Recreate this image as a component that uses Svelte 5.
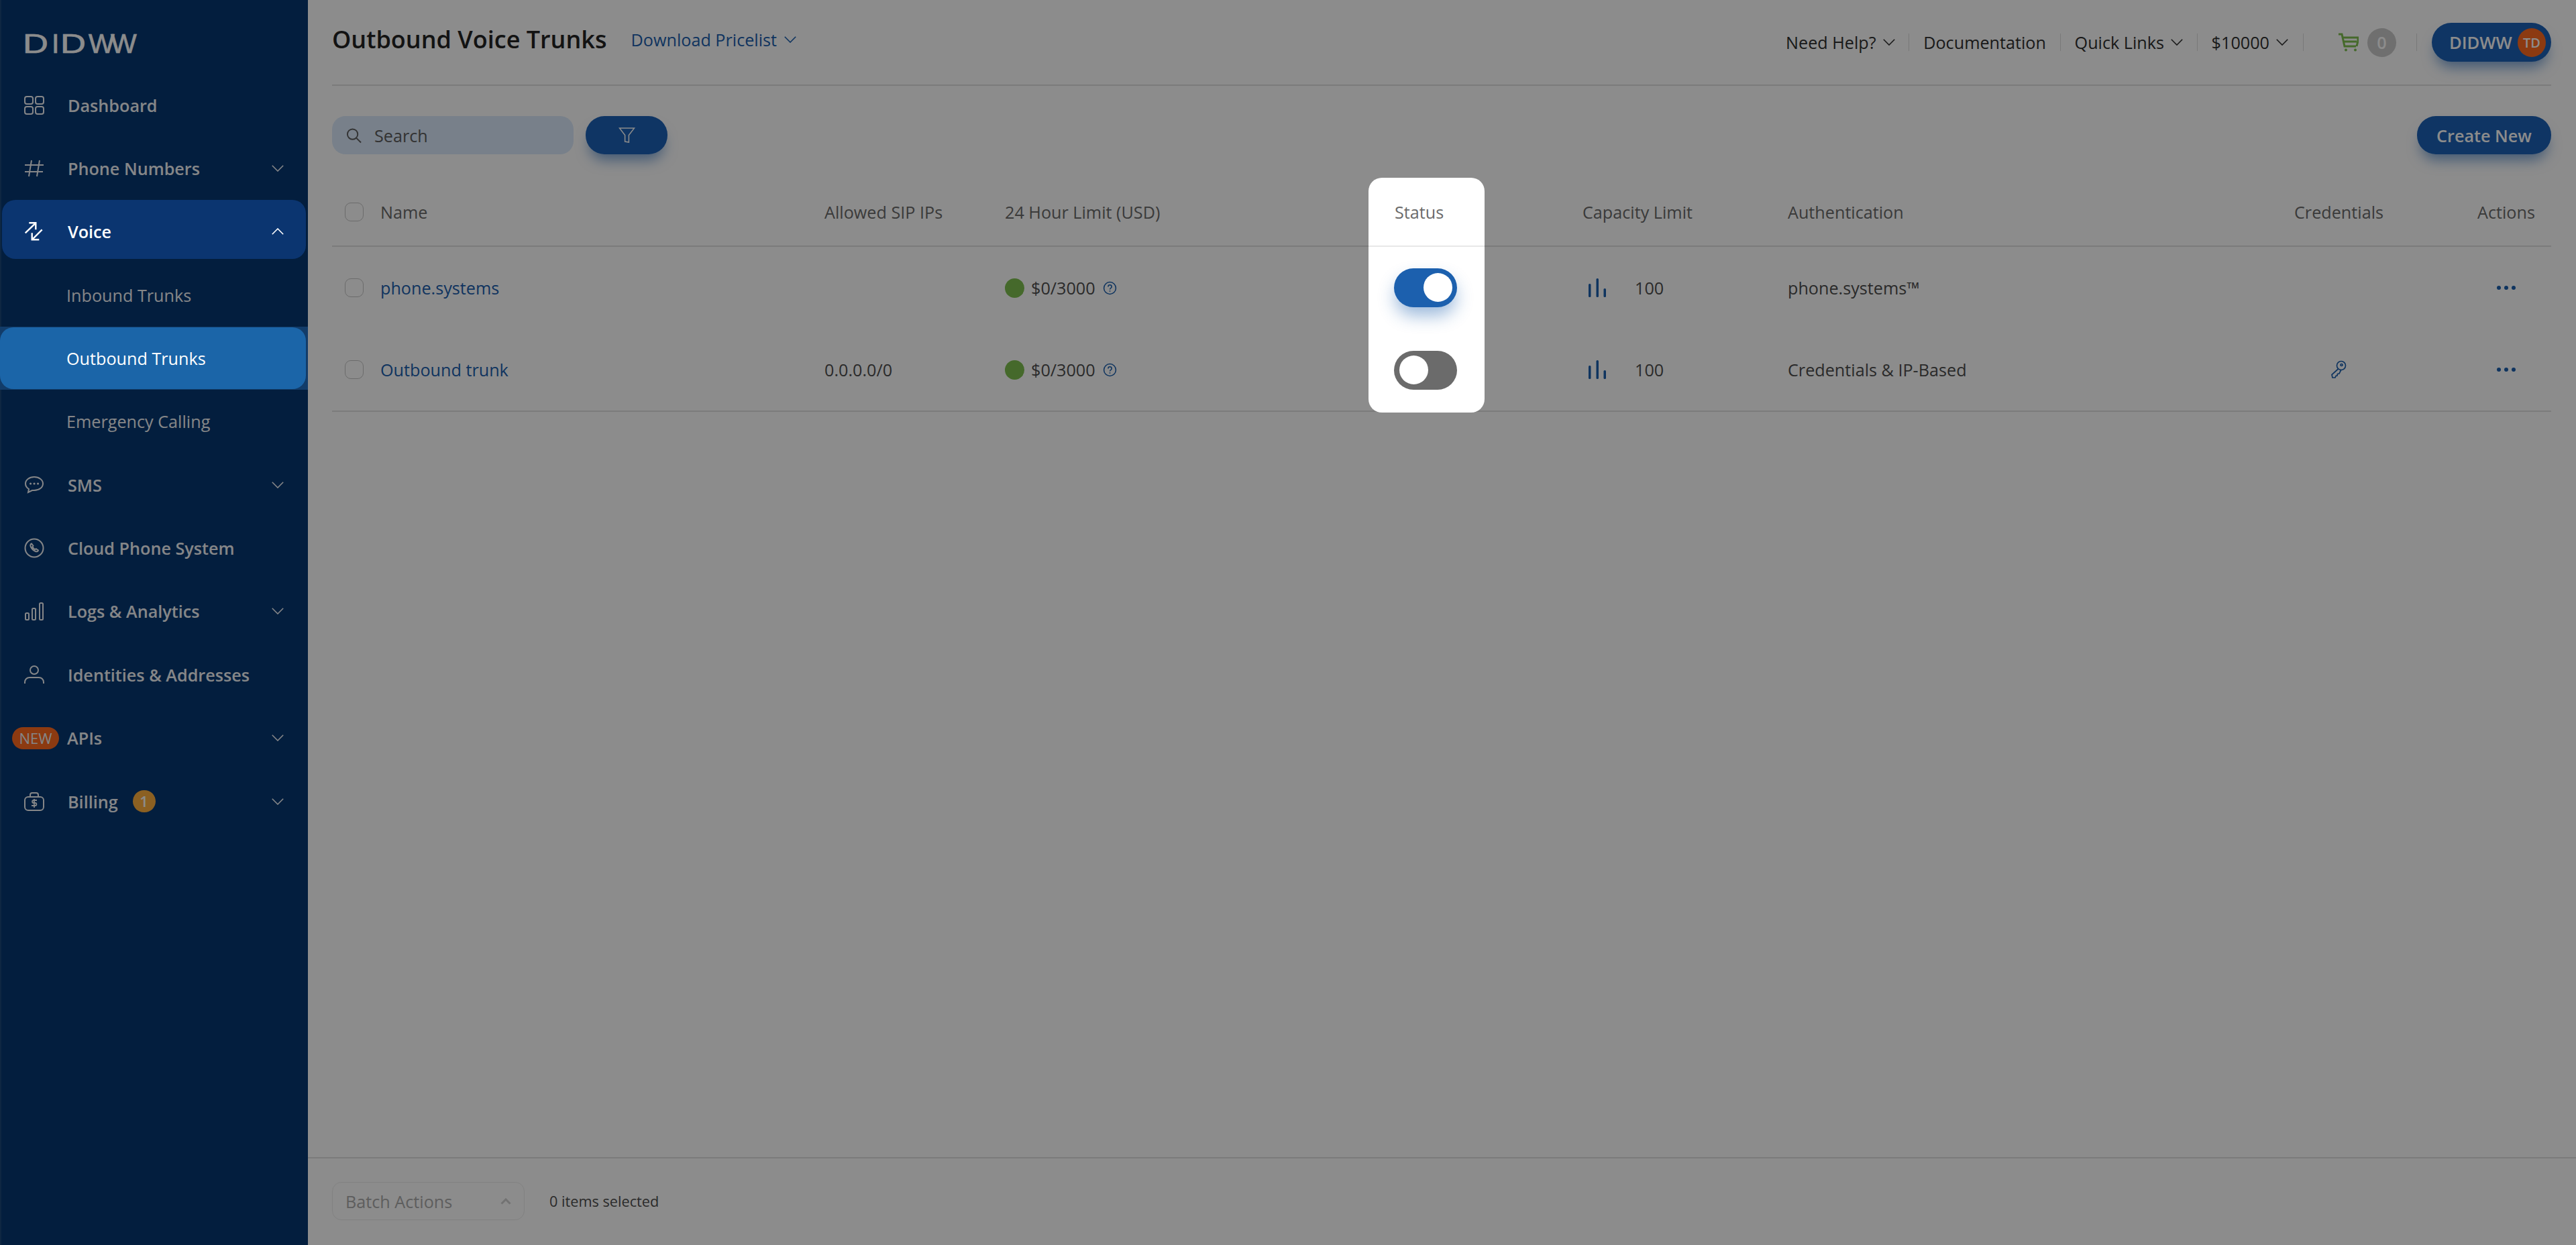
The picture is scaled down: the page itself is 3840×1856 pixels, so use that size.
<script>
  const nav = [
    { label: 'Dashboard', icon: 'dash' },
    { label: 'Phone Numbers', icon: 'hash', chev: true },
    { label: 'Voice', icon: 'voice', chev: true, open: true },
    { label: 'Inbound Trunks', sub: true },
    { label: 'Outbound Trunks', sub: true, current: true },
    { label: 'Emergency Calling', sub: true },
    { label: 'SMS', icon: 'sms', chev: true },
    { label: 'Cloud Phone System', icon: 'phone' },
    { label: 'Logs & Analytics', icon: 'logs', chev: true },
    { label: 'Identities & Addresses', icon: 'user' },
    { label: 'APIs', icon: 'new', chev: true },
    { label: 'Billing', icon: 'bill', chev: true, badge: '1' }
  ];
  const rows = [
    { name: 'phone.systems', ips: '', auth: 'phone.systems™', key: false, on: true },
    { name: 'Outbound trunk', ips: '0.0.0.0/0', auth: 'Credentials & IP-Based', key: true, on: false }
  ];
</script>

{#snippet chevron(cls)}
  <svg class={cls} viewBox="0 0 18 10" fill="none" stroke="currentColor" stroke-width="1.6"><path d="M.8.8 9 9 17.2.8"/></svg>
{/snippet}

<div class="app">
  <aside class="side">
    <div class="logo"><span class="d">D</span><span class="n">I</span><span class="d">D</span><span class="w">W</span><span class="w">W</span></div>
    <nav class="menu">
      {#each nav as n}
        <div class="item" class:sub={n.sub} class:open={n.open} class:current={n.current}>
          <div class="pill">
            {#if n.icon === 'new'}
              <span class="new">NEW</span>
            {:else if n.icon}
              <svg class="ico" viewBox="0 0 30 30" fill="none" stroke="currentColor" stroke-width="2">
                {#if n.icon === 'dash'}
                  <rect x="1" y="2" width="12" height="11" rx="3"/><rect x="17" y="2" width="12" height="11" rx="3"/><rect x="1" y="17" width="12" height="11" rx="3"/><rect x="17" y="17" width="12" height="11" rx="3"/>
                {:else if n.icon === 'hash'}
                  <path d="M11 3 7 27M23 3l-4 24M1 10h28M1 20h27"/>
                {:else if n.icon === 'voice'}
                  <path stroke-width="2.4" d="M1.700 17.300 17.300 2.300M7.300 2.300h10v10M26.700 12.300 11.700 27.300M11.700 17.300v10h10.600"/>
                {:else if n.icon === 'sms'}
                  <path d="M15 3C7.500 3 2 7.500 2 13c0 3.500 2.200 6.300 5 8l-1 5 6-3h3c7.500 0 13-4.500 13-10S22.500 3 15 3Z"/><path stroke-width="3" stroke-linecap="round" d="M9.500 13h.1M15 13h.1M20.500 13h.1"/>
                {:else if n.icon === 'phone'}
                  <circle cx="15" cy="15" r="13.500"/><path stroke-width="2" d="M11 8.500c-2 .8-2.200 3-.8 5.300 1.500 3 3.800 5 6.800 6.200 2 .6 3.600 0 4-1.600l-3.200-2.200-1.600 1c-1.800-1-3-2.300-3.800-4.200l1-1.500Z"/>
                {:else if n.icon === 'logs'}
                  <rect x="2" y="18" width="5" height="10" rx="1.500"/><rect x="12" y="11" width="5" height="17" rx="1.500"/><rect x="23" y="3" width="5" height="25" rx="1.500"/>
                {:else if n.icon === 'user'}
                  <circle cx="15" cy="8" r="6"/><path d="M1 28v-2c0-4 3-7 7-7h14c4 0 7 3 7 7v2"/>
                {:else if n.icon === 'bill'}
                  <path d="M9 8V5c0-2 1-3 3-3h6c2 0 3 1 3 3v3"/><rect x="1" y="8" width="28" height="20" rx="5"/><path stroke-width="1.800" d="M19 13h-5c-2.500 0-2.500 4 0 4h2.500c2.500 0 2.500 4 0 4H11M15 11v13"/>
                {/if}
              </svg>
            {/if}
            <span class="lbl">{n.label}</span>
            {#if n.badge}<span class="bdg">{n.badge}</span>{/if}
            {#if n.chev}{@render chevron(n.open ? 'nchev up' : 'nchev')}{/if}
          </div>
        </div>
      {/each}
    </nav>
  </aside>

  <main class="main">
    <header class="top">
      <div class="titles">
        <h1>Outbound Voice Trunks</h1>
        <a class="dl">Download Pricelist {@render chevron('chev')}</a>
      </div>
      <div class="links">
        <span class="lk">Need Help? {@render chevron('chev')}</span><i class="sep"></i>
        <span class="lk">Documentation</span><i class="sep"></i>
        <span class="lk">Quick Links {@render chevron('chev')}</span><i class="sep"></i>
        <span class="lk">$10000 {@render chevron('chev')}</span><i class="sep end"></i>
        <svg class="cart" viewBox="0 0 30 28" fill="none" stroke="#7ec04f" stroke-width="3"><path d="M0 2h5l4 18h17M6 7h23v5l-2 8M8 13h19"/><circle cx="11" cy="25.500" r="2" fill="#7ec04f" stroke="none"/><circle cx="25" cy="25.500" r="2" fill="#7ec04f" stroke="none"/></svg>
        <span class="zero">0</span><i class="sep last"></i>
        <button class="user">DIDWW<span class="av">TD</span></button>
      </div>
    </header>

    <div class="tools">
      <div class="search">
        <svg class="mag" viewBox="0 0 24 24" fill="none" stroke="currentColor" stroke-width="2"><circle cx="10" cy="10" r="8"/><path d="m16 16 7 7"/></svg>
        <span>Search</span>
      </div>
      <button class="fbtn" aria-label="Filter">
        <svg viewBox="0 0 26 26" fill="none" stroke="#fff" stroke-width="1.600"><path d="M1.500 2h23L16 13v11l-6-1V13Z"/></svg>
      </button>
      <button class="create">Create New</button>
    </div>

    <div class="table">
      <div class="row head">
        <div class="c first"><i class="box"></i>Name</div><div class="c">Allowed SIP IPs</div><div class="c">24 Hour Limit (USD)</div><div class="c"></div><div class="c">Capacity Limit</div><div class="c">Authentication</div><div class="c">Credentials</div><div class="c">Actions</div>
      </div>
      {#each rows as r, i}
        <div class="row body" class:end={i === 1}>
          <div class="c first"><i class="box"></i><a class="name">{r.name}</a></div>
          <div class="c">{r.ips}</div>
          <div class="c"><i class="dot"></i>$0/3000
            <svg class="q" viewBox="0 0 20 20" fill="none" stroke="#1c60ae" stroke-width="1.500"><circle cx="10" cy="10" r="8.500"/><path d="M7.500 8c0-3.300 5-3.300 5 0 0 2-2.500 2-2.500 4M10 13.500v1.500"/></svg>
          </div>
          <div class="c"></div>
          <div class="c">
            <svg class="bars" viewBox="0 0 27 28" fill="#1c60ae"><rect x="0" y="8" width="3.500" height="20" rx="1.500"/><rect x="11.500" y="0" width="3.500" height="28" rx="1.500"/><rect x="22.500" y="15" width="3.500" height="13" rx="1.500"/></svg>100
          </div>
          <div class="c">{r.auth}</div>
          <div class="c cred">
            {#if r.key}
              <svg class="key" viewBox="0 0 24 28" fill="none" stroke="#1c60ae" stroke-width="1.700"><circle cx="16" cy="8" r="6.500"/><circle cx="16.500" cy="7" r="1.500"/><path d="M11.500 13 2 21.500l1 4.500h4l1-2.500 2-.5.500-2.500 2.500-.5 3-6"/></svg>
            {/if}
          </div>
          <div class="c act"><i></i><i></i><i></i></div>
        </div>
      {/each}

      <div class="spot">
        <div class="spot-head">Status</div>
        {#each rows as r}
          <div class="spot-cell"><div class="tgl" class:on={r.on}><span></span></div></div>
        {/each}
      </div>
    </div>

    <footer class="foot">
      <div class="batch"><span>Batch Actions</span><svg viewBox="0 0 16 10" fill="none" stroke="currentColor" stroke-width="3"><path d="M1.500 8.500 8 2l6.500 6.500"/></svg></div>
      <span class="sel">0 items selected</span>
    </footer>
  </main>
  <div class="overlay"></div>
</div>

<style>
  :global(body) { margin: 0; background: #fff; }
  .app { display: flex; height: 1856px; width: 3840px; overflow: hidden; font-family: "Open Sans", "Noto Sans", sans-serif; font-size: 25.2px; color: #4e4e4e; }
  .overlay { position: fixed; inset: 0; background: rgba(0,0,0,.45); z-index: 10; }

  .side { width: 459px; flex: none; box-sizing: border-box; background: #073771; border-left: 2px solid #1b4779; color: #f2f4f7; }
  .logo { height: 109.500px; box-sizing: border-box; padding: 41px 0 0 32px; display: flex; font: 400 41px/48px "Liberation Sans", sans-serif; color: #fff; -webkit-text-stroke: .7px #fff; }
  .logo span { display: block; transform-origin: 0 50%; }
  .logo .d { width: 43px; transform: scaleX(1.28); }
  .logo .n { width: 13px; }
  .logo .w { width: 34px; margin-left: -1px; }
  .item { height: 94.400px; display: flex; }
  .pill { flex: 1; display: flex; align-items: center; padding: 0 36px 0 34px; font-weight: 600; }
  .ico { width: 30px; height: 30px; flex: none; margin-right: 35px; }
  .lbl { white-space: nowrap; }
  .nchev { width: 18px; height: 10px; margin-left: auto; flex: none; }
  .nchev.up { transform: rotate(180deg); }
  .sub .pill { padding-left: 97px; font-weight: 400; }
  .open, .current { position: relative; z-index: 20; color: #fff; }
  .open { align-items: flex-start; }
  .open .pill { height: 88px; box-sizing: border-box; background: #0b3570; border-radius: 20px; margin: 0 3px 0 1px; padding: 6px 33px 0 33px; }
  .current { background: #123c69; margin-left: -2px; height: 94px; }
  .current .pill { background: #1b65a8; border-radius: 20px; margin: 1px 3px 1px 0; padding-left: 99px; }
  .new { width: 70px; height: 33px; flex: none; box-sizing: border-box; margin: 0 12px 0 -18px; border-radius: 17px; background: #ff6a20; font-size: 22px; font-weight: 400; line-height: 33px; text-align: center; }
  .bdg { width: 34px; height: 33px; margin-left: 22px; border-radius: 17px; background: #fdaf3e; font-size: 22px; font-weight: 600; line-height: 33px; text-align: center; color: #fff; }

  .main { flex: 1; min-width: 0; display: flex; flex-direction: column; padding: 0 37px 0 36px; background: #fff; }
  .top { height: 126px; flex: none; box-sizing: content-box; border-bottom: 2px solid #e0e0e0; display: flex; align-items: center; justify-content: space-between; }
  .titles { display: flex; align-items: center; padding: 0 0 9px 0; }
  h1 { margin: 0; font-size: 36px; font-weight: 600; color: #242424; }
  .dl { margin-left: 36px; color: #1c60ae; display: flex; align-items: center; gap: 11px; }
  .chev { width: 18px; height: 10px; flex: none; }
  .links { display: flex; align-items: center; color: #2f2f2f; }
  .lk { display: flex; align-items: center; gap: 10px; white-space: nowrap; }
  .sep { width: 1px; height: 26px; margin: 0 20.800px; background: #ddd; }
  .sep.end { margin: 0 22px; }
  .sep.last { margin: 0 22px 0 30px; }
  .cart { width: 30px; height: 28px; margin-left: 30px; }
  .zero { width: 43px; height: 43px; margin-left: 13px; border-radius: 50%; background: #cacaca; color: #fff; font-weight: 600; text-align: center; line-height: 43px; }
  button { font: inherit; border: 0; padding: 0; color: #fff; }
  .user { height: 58px; width: 178px; border-radius: 29px; background: #1d62b6; font-size: 25.600px; font-weight: 600; display: flex; align-items: center; justify-content: space-between; padding: 0 8px 0 26px; box-shadow: 0 14px 20px -6px rgba(29,98,182,.6); }
  .av { width: 42px; height: 43px; border-radius: 50%; background: #ff6a20; font-size: 20px; line-height: 43px; text-align: center; }

  .tools { height: 57px; flex: none; margin-top: 45px; display: flex; gap: 18px; }
  .search { width: 360px; box-sizing: border-box; padding-left: 21px; border-radius: 20px; background: #dae9fb; color: #5d5d5d; display: flex; align-items: center; gap: 19px; }
  .mag { width: 23px; height: 24px; }
  .fbtn { width: 122px; border-radius: 28px; background: #1d62b6; display: flex; align-items: center; justify-content: center; box-shadow: 0 14px 20px -6px rgba(29,98,182,.6); }
  .fbtn svg { width: 25px; height: 25px; }
  .create { margin-left: auto; width: 200px; border-radius: 28px; background: #1d62b6; font-weight: 600; box-shadow: 0 14px 20px -6px rgba(29,98,182,.6); }

  .table { position: relative; margin-top: 37px; }
  .row { display: grid; box-sizing: border-box; grid-template-columns: 734px 269px 581px 280px 306px 755px 273px 110px; }
  .c { display: flex; align-items: center; white-space: nowrap; }
  .head { height: 101px; padding-bottom: 1px; border-bottom: 2px solid #e0e0e0; color: #6b6b6b; }
  .body { height: 122.500px; }
  .body.end { border-bottom: 2px solid #e0e0e0; height: 123.500px; }
  .first { padding-left: 19px; }
  .box { width: 28px; height: 28px; box-sizing: border-box; margin-right: 25px; border: 1.500px solid #c4c4c4; border-radius: 9px; }
  .name { color: #1c60ae; }
  .dot { width: 29px; height: 29px; margin-right: 10px; border-radius: 50%; background: #7ec04f; }
  .q { width: 21px; height: 21px; margin-left: 11px; }
  .bars { width: 27px; height: 28px; margin: 0 42px 0 9px; }
  .cred { padding-left: 54px; }
  .key { width: 24px; height: 28px; }
  .act { justify-content: center; gap: 5px; padding-right: 24px; padding-bottom: 1px; }
  .act i { width: 6px; height: 6px; border-radius: 50%; background: #1c60ae; }

  .spot { position: absolute; left: 1545px; top: -2px; width: 173px; height: 350px; box-sizing: border-box; border-radius: 20px; background: #fff; z-index: 20; padding: 0 38px; }
  .spot::before { content: ""; position: absolute; left: 0; right: 0; top: 101px; height: 2px; background: #e8e8e8; }
  .spot-head { height: 103px; display: flex; align-items: center; padding: 0 0 2px 1px; box-sizing: border-box; color: #6b6b6b; }
  .spot-cell { height: 122.500px; display: flex; align-items: center; }
  .tgl { width: 94px; height: 58px; box-sizing: border-box; padding: 7px 8px; display: flex; border-radius: 29px; background: #6b6b6b; }
  .tgl span { width: 43px; height: 43px; border-radius: 50%; background: #fff; }
  .tgl.on { padding-right: 7px; background: #1c60ae; justify-content: flex-end; box-shadow: 0 14px 26px -2px rgba(28,96,174,.45); }

  .foot { margin: auto -37px 0 -36px; padding: 35px 0 0 36px; height: 131px; box-sizing: border-box; border-top: 2px solid #e0e0e0; display: flex; align-items: flex-start; }
  .batch { width: 287px; height: 57px; box-sizing: border-box; padding: 0 19px 0 19px; border: 1.500px solid #ececec; border-radius: 14px; color: #ababab; display: flex; align-items: center; justify-content: space-between; }
  .batch svg { width: 16px; height: 10px; color: #d0d0d0; }
  .sel { margin-left: 37px; height: 57px; line-height: 57px; font-size: 21.700px; }
</style>
